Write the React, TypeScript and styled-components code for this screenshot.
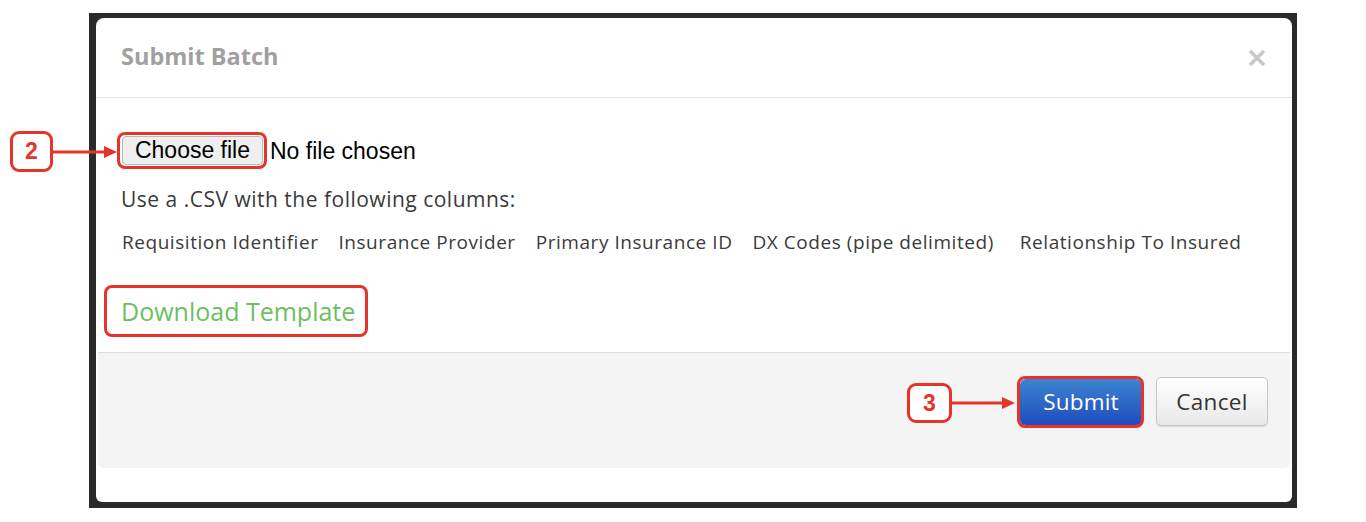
import styled, { createGlobalStyle } from "styled-components";

const GlobalStyle = createGlobalStyle`
  html, body {
    margin: 0;
    padding: 0;
    background: #ffffff;
  }
  * {
    box-sizing: border-box;
  }
`;

const Page = styled.div`
  position: relative;
  width: 1366px;
  height: 522px;
  overflow: hidden;
  background: #ffffff;
  font-family: "Open Sans", Lato, sans-serif;
  padding-top: 13px;
  padding-left: 89px;
`;

const Frame = styled.div`
  width: 1208px;
  height: 495px;
  background: #2a2a2a;
  padding: 5px 5px 6px 7px;
`;

const Modal = styled.div`
  height: 100%;
  background: #ffffff;
  border-radius: 8px 8px 6px 6px;
  display: flex;
  flex-direction: column;
`;

const Header = styled.div`
  height: 80px;
  border-bottom: 1px solid #e6e6e6;
  display: flex;
  align-items: center;
  justify-content: space-between;
  padding: 0 26px 0 25px;
`;

const Title = styled.h3`
  margin: -3px 0 0;
  font-size: 23.5px;
  font-weight: 700;
  color: #a0a0a0;
`;

const Close = styled.button`
  border: 0;
  background: transparent;
  padding: 0;
  width: 18px;
  height: 18px;
  display: flex;
  cursor: pointer;
`;

const Body = styled.div`
  height: 254px;
  padding: 38px 25px 0;
  display: flex;
  flex-direction: column;
  align-items: flex-start;
`;

const FileRow = styled.div`
  display: flex;
  align-items: center;
  margin-left: 1px;
  font-family: "Liberation Sans", Arial, sans-serif;
  font-size: 23px;
  color: #000;
`;

const FileButton = styled.button`
  width: 141px;
  height: 29px;
  padding: 0;
  background: #efefef;
  border: 1px solid #b9b9b9;
  border-radius: 4px;
  font-family: "Liberation Sans", Arial, sans-serif;
  font-size: 23px;
  line-height: 27px;
  color: #000;
`;

const FileName = styled.span`
  margin-left: 7px;
  margin-top: 1px;
`;

const Highlight = styled.span<{ $x: number; $y: number; $r?: number }>`
  position: relative;
  display: inline-flex;
  &::after {
    content: "";
    position: absolute;
    top: -${(p) => p.$y}px;
    bottom: -${(p) => p.$y}px;
    left: -${(p) => p.$x}px;
    right: -${(p) => p.$r ?? p.$x}px;
    border: 3px solid #e5352a;
    border-radius: 8px;
    pointer-events: none;
  }
`;

const Instruction = styled.p`
  margin: 22px 0 0;
  font-size: 21px;
  line-height: 24px;
  letter-spacing: 0.5px;
  color: #3a3a3a;
`;

const Columns = styled.div`
  margin-top: 20px;
  margin-left: 1px;
  display: flex;
  gap: 20px;
  font-size: 19px;
  line-height: 22px;
  letter-spacing: 0.55px;
  color: #3a3a3a;
`;

const Column = styled.span<{ $extra?: number }>`
  margin-right: ${(p) => p.$extra ?? 0}px;
`;

const TemplateLink = styled.a`
  font-size: 25px;
  line-height: 30px;
  color: #6cbf5f;
  text-decoration: none;
  cursor: pointer;
`;

const Footer = styled.div`
  height: 116px;
  margin: 0 2px;
  background: #f4f4f4;
  border-top: 1px solid #dedede;
  border-radius: 0 0 6px 6px;
  display: flex;
  justify-content: flex-end;
  align-items: flex-start;
  padding: 24px 22px 0 0;
`;

const Buttons = styled.div`
  display: flex;
  align-items: center;
  gap: 14px;
  height: 49px;
`;

const PrimaryButton = styled.button`
  width: 122px;
  height: 46px;
  border: 0;
  border-radius: 6px;
  background: linear-gradient(#3d84d2, #1e4cbc);
  box-shadow: 0 2px 0 #173f9c;
  color: #ffffff;
  font-family: "Open Sans", Lato, sans-serif;
  font-size: 22.5px;
  letter-spacing: 0.2px;
  cursor: pointer;
`;

const SecondaryButton = styled.button`
  width: 112px;
  height: 49px;
  border: 1px solid #c6c6c6;
  border-radius: 5px;
  background: linear-gradient(#ffffff, #e8e8e8);
  box-shadow: 0 1px 1px rgba(0, 0, 0, 0.12);
  color: #333333;
  font-family: "Open Sans", Lato, sans-serif;
  font-size: 22.5px;
  letter-spacing: 0.3px;
  cursor: pointer;
`;

const Callout = styled.div<{ $left: number; $top: number }>`
  position: absolute;
  left: ${(p) => p.$left}px;
  top: ${(p) => p.$top}px;
  display: flex;
  align-items: center;
`;

const Badge = styled.span<{ $w: number; $h: number }>`
  width: ${(p) => p.$w}px;
  height: ${(p) => p.$h}px;
  border: 3px solid #e5352a;
  border-radius: 9px;
  background: #ffffff;
  color: #e5352a;
  font-family: "Liberation Sans", Arial, sans-serif;
  font-weight: 700;
  font-size: 23px;
  display: flex;
  align-items: center;
  justify-content: center;
`;

function Arrow({ length }: { length: number }) {
  return (
    <svg width={length} height="14" viewBox={`0 0 ${length} 14`}>
      <line x1="0" y1="7" x2={length - 11} y2="7" stroke="#e5352a" strokeWidth="3" />
      <polygon points={`${length - 13},1 ${length},7 ${length - 13},13`} fill="#e5352a" />
    </svg>
  );
}

const columns = [
  "Requisition Identifier",
  "Insurance Provider",
  "Primary Insurance ID",
  "DX Codes (pipe delimited)",
  "Relationship To Insured",
];

export default function App() {
  return (
    <>
      <GlobalStyle />
      <Page>
        <Frame>
          <Modal>
            <Header>
              <Title>Submit Batch</Title>
              <Close aria-label="Close">
                <svg width="18" height="18" viewBox="0 0 18 18">
                  <path d="M2 2 L16 16 M16 2 L2 16" stroke="#c8c8c8" strokeWidth="3.6" />
                </svg>
              </Close>
            </Header>
            <Body>
              <FileRow>
                <Highlight $x={5} $y={4} $r={4}>
                  <FileButton>Choose file</FileButton>
                </Highlight>
                <FileName>No file chosen</FileName>
              </FileRow>
              <Instruction>Use a .CSV with the following columns:</Instruction>
              <Columns>
                {columns.map((c, i) => (
                  <Column key={c} $extra={i === 3 ? 6 : 0}>
                    {c}
                  </Column>
                ))}
              </Columns>
              <Highlight $x={17} $y={11} $r={13} style={{ marginTop: 43 }}>
                <TemplateLink>Download Template</TemplateLink>
              </Highlight>
            </Body>
            <Footer>
              <Buttons>
                <Highlight $x={3} $y={3} $r={2}>
                  <PrimaryButton>Submit</PrimaryButton>
                </Highlight>
                <SecondaryButton>Cancel</SecondaryButton>
              </Buttons>
            </Footer>
          </Modal>
        </Frame>
        <Callout $left={10} $top={131}>
          <Badge $w={43} $h={41}>2</Badge>
          <Arrow length={64} />
        </Callout>
        <Callout $left={907} $top={383}>
          <Badge $w={45} $h={40}>3</Badge>
          <Arrow length={63} />
        </Callout>
      </Page>
    </>
  );
}
